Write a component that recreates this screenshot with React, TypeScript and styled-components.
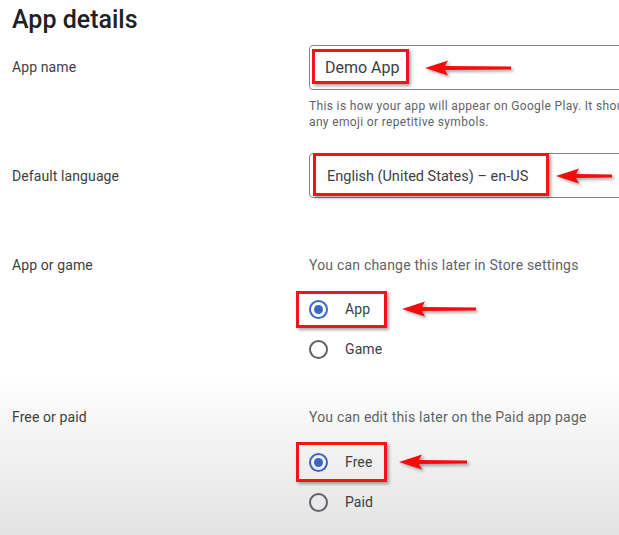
import React from "react";
import styled, { createGlobalStyle } from "styled-components";

const GlobalStyle = createGlobalStyle`
  html, body {
    margin: 0;
    height: 100%;
  }
  body {
    font-family: Roboto, "Liberation Sans", sans-serif;
    background: linear-gradient(to bottom, #ffffff 0%, #ffffff 70%, #e3e3e3 100%);
    overflow: hidden;
  }
  #root {
    height: 100%;
  }
`;

const Page = styled.div`
  padding-left: 12px;
  height: 100%;
  overflow: hidden;
`;

const Title = styled.h1`
  margin: 4px 0 9px;
  font-size: 25px;
  line-height: 32px;
  font-weight: 500;
  color: #202124;
`;

const Row = styled.div<{ $mt?: number }>`
  display: grid;
  grid-template-columns: 297px 1fr;
  margin-top: ${(p) => p.$mt ?? 0}px;
`;

const Label = styled.div<{ $pt?: number }>`
  padding-top: ${(p) => p.$pt ?? 0}px;
  font-size: 14px;
  line-height: 20px;
  letter-spacing: 0.1px;
  color: #3c4043;
`;

const Content = styled.div`
  display: flex;
  flex-direction: column;
  min-width: 0;
`;

const Field = styled.div`
  display: flex;
  align-items: center;
  height: 45px;
  width: 400px;
  box-sizing: border-box;
  border: 1px solid #80868b;
  border-radius: 4px;
  padding-left: 2px;
`;

const Highlight = styled.div<{ $h: number; $pl: number; $pr?: number; $ml?: number; $mt?: number }>`
  display: flex;
  align-items: center;
  box-sizing: border-box;
  height: ${(p) => p.$h}px;
  padding: 0 ${(p) => p.$pr ?? 14}px 0 ${(p) => p.$pl}px;
  margin-left: ${(p) => p.$ml ?? 0}px;
  margin-top: ${(p) => p.$mt ?? 0}px;
  border: 3px solid #f0141b;
  box-shadow: 2px 2px 3px rgba(0, 0, 0, 0.35);
`;

const FieldText = styled.span<{ $size?: number; $dy?: number }>`
  font-size: ${(p) => p.$size ?? 16}px;
  padding-top: ${(p) => p.$dy ?? 0}px;
  color: #3c4043;
  white-space: nowrap;
`;

const Helper = styled.div`
  margin-top: 8px;
  font-size: 12px;
  line-height: 16px;
  letter-spacing: 0.35px;
  color: #5f6368;
  white-space: nowrap;
`;

const Hint = styled.div`
  font-size: 14px;
  line-height: 20px;
  letter-spacing: 0.2px;
  color: #5f6368;
  white-space: nowrap;
`;

const Options = styled.div<{ $mt: number }>`
  display: flex;
  flex-direction: column;
  margin-top: ${(p) => p.$mt}px;
`;

const OptionLine = styled.div`
  display: flex;
  align-items: center;
  height: 40px;
`;

const RadioItem = styled.div`
  display: flex;
  align-items: center;
  gap: 17px;
`;

const RadioCircle = styled.span<{ $checked?: boolean }>`
  position: relative;
  width: 19px;
  height: 19px;
  box-sizing: border-box;
  border-radius: 50%;
  border: 2px solid ${(p) => (p.$checked ? "#3b66c4" : "#5f6368")};
  flex-shrink: 0;
  &::after {
    content: "";
    display: ${(p) => (p.$checked ? "block" : "none")};
    position: absolute;
    inset: 3px;
    border-radius: 50%;
    background: #3b66c4;
  }
`;

const RadioLabel = styled.span`
  font-size: 14px;
  letter-spacing: 0.1px;
  color: #3c4043;
`;

const ArrowSvg = styled.svg<{ $gap: number }>`
  margin-left: ${(p) => p.$gap}px;
  flex-shrink: 0;
  overflow: visible;
  filter: drop-shadow(2px 2px 1.5px rgba(0, 0, 0, 0.35));
`;

const Arrow = ({ width, gap }: { width: number; gap: number }) => (
  <ArrowSvg $gap={gap} width={width} height={18} viewBox={`0 0 ${width} 18`}>
    <polygon
      points={`0,9 23,1.5 20,7 ${width},7.5 ${width},10.5 20,11 23,16.5`}
      fill="#f40c0c"
    />
  </ArrowSvg>
);

const Radio = ({ label, checked }: { label: string; checked?: boolean }) => (
  <RadioItem>
    <RadioCircle $checked={checked} />
    <RadioLabel>{label}</RadioLabel>
  </RadioItem>
);

const App = () => {
  return (
    <Page>
      <GlobalStyle />
      <Title>App details</Title>

      <Row>
        <Label $pt={12}>App name</Label>
        <Content>
          <Field>
            <Highlight $h={35} $pl={10} $pr={6} $mt={-3}>
              <FieldText $dy={2}>Demo App</FieldText>
            </Highlight>
            <Arrow width={86} gap={16} />
          </Field>
          <Helper>
            This is how your app will appear on Google Play. It should be short and not include
            <br />
            any emoji or repetitive symbols.
          </Helper>
        </Content>
      </Row>

      <Row $mt={23}>
        <Label $pt={13}>Default language</Label>
        <Content>
          <Field>
            <Highlight $h={43} $pl={11} $pr={18} $ml={1} $mt={-3}>
              <FieldText $size={14.5} $dy={4}>
                English (United States) – en-US
              </FieldText>
            </Highlight>
            <Arrow width={56} gap={7} />
          </Field>
        </Content>
      </Row>

      <Row $mt={57}>
        <Label>App or game</Label>
        <Content>
          <Hint>You can change this later in Store settings</Hint>
          <Options $mt={14}>
            <OptionLine>
              <Highlight $h={37} $pl={10} $ml={-13}>
                <Radio label="App" checked />
              </Highlight>
              <Arrow width={74} gap={15} />
            </OptionLine>
            <OptionLine>
              <Radio label="Game" />
            </OptionLine>
          </Options>
        </Content>
      </Row>

      <Row $mt={38}>
        <Label>Free or paid</Label>
        <Content>
          <Hint>You can edit this later on the Paid app page</Hint>
          <Options $mt={15}>
            <OptionLine>
              <Highlight $h={40} $pl={10} $pr={12} $ml={-13}>
                <Radio label="Free" checked />
              </Highlight>
              <Arrow width={68} gap={12} />
            </OptionLine>
            <OptionLine>
              <Radio label="Paid" />
            </OptionLine>
          </Options>
        </Content>
      </Row>
    </Page>
  );
};

export default App;
